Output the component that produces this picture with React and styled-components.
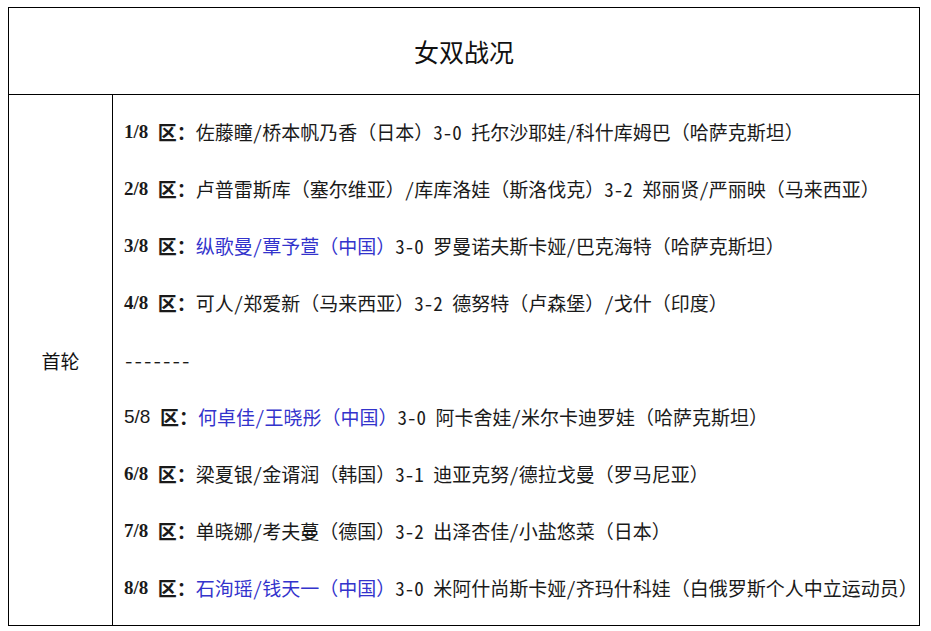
import styled, { createGlobalStyle } from 'styled-components'

const GlobalStyle = createGlobalStyle`
    html, body {
        margin: 0;
        padding: 0;
        background: #ffffff;
    }
    body {
        font-family: "Noto Sans Mono CJK SC", "Noto Sans CJK SC", "Liberation Serif", serif;
        color: #1a1a1a;
    }
`

const rounds = [
    { area: '1/8', win: '佐藤瞳/桥本帆乃香（日本）', score: '3-0', lose: '托尔沙耶娃/科什库姆巴（哈萨克斯坦）' },
    { area: '2/8', win: '卢普雷斯库（塞尔维亚）/库库洛娃（斯洛伐克）', score: '3-2', lose: '郑丽贤/严丽映（马来西亚）' },
    { area: '3/8', win: '纵歌曼/覃予萱（中国）', score: '3-0', lose: '罗曼诺夫斯卡娅/巴克海特（哈萨克斯坦）', china: true },
    { area: '4/8', win: '可人/郑爱新（马来西亚）', score: '3-2', lose: '德努特（卢森堡）/戈什（印度）' },
    { divider: true },
    { area: '5/8', win: '何卓佳/王晓彤（中国）', score: '3-0', lose: '阿卡舍娃/米尔卡迪罗娃（哈萨克斯坦）', china: true, plain: true },
    { area: '6/8', win: '梁夏银/金谞润（韩国）', score: '3-1', lose: '迪亚克努/德拉戈曼（罗马尼亚）' },
    { area: '7/8', win: '单晓娜/考夫蔓（德国）', score: '3-2', lose: '出泽杏佳/小盐悠菜（日本）' },
    { area: '8/8', win: '石洵瑶/钱天一（中国）', score: '3-0', lose: '米阿什尚斯卡娅/齐玛什科娃（白俄罗斯个人中立运动员）', china: true },
]

const App = () => {
    return (
        <>
            <GlobalStyle />
            <Page>
                <Table>
                    <TitleRow>女双战况</TitleRow>
                    <BodyRow>
                        <RoundCell>首轮</RoundCell>
                        <ResultCell>
                            {rounds.map((r, i) =>
                                r.divider ? (
                                    <Line key={i}>-------</Line>
                                ) : (
                                    <Line key={i}>
                                        <Area $plain={r.plain}>{r.area}</Area>
                                        <AreaLabel> 区：</AreaLabel>
                                        <Team $china={r.china}>{r.win}</Team>
                                        {r.score} {r.lose}
                                    </Line>
                                )
                            )}
                        </ResultCell>
                    </BodyRow>
                </Table>
            </Page>
        </>
    )
}

const Page = styled.div`
    padding: 7px 0 0 8px;
`

const Table = styled.div`
    width: 912px;
    box-sizing: border-box;
    border: 1px solid #000000;
`

const TitleRow = styled.div`
    height: 86px;
    display: flex;
    align-items: center;
    justify-content: center;
    border-bottom: 1px solid #000000;
    font-size: 25px;
    color: #111111;
`

const BodyRow = styled.div`
    display: grid;
    grid-template-columns: 104px 1fr;
`

const RoundCell = styled.div`
    display: flex;
    align-items: center;
    justify-content: center;
    border-right: 1px solid #000000;
    font-size: 19px;
    color: #111111;
`

const ResultCell = styled.div`
    padding: 8px 0 9px 11px;
`

const Line = styled.div`
    height: 57px;
    display: flex;
    align-items: center;
    white-space: pre;
    font-size: 19px;
`

const Area = styled.span`
    font-family: ${p => (p.$plain ? '"Liberation Sans", sans-serif' : '"Liberation Serif", serif')};
    font-weight: ${p => (p.$plain ? 400 : 700)};
`

const AreaLabel = styled.span`
    font-weight: 700;
`

const Team = styled.span`
    color: ${p => (p.$china ? '#3333cc' : 'inherit')};
`

export default App
